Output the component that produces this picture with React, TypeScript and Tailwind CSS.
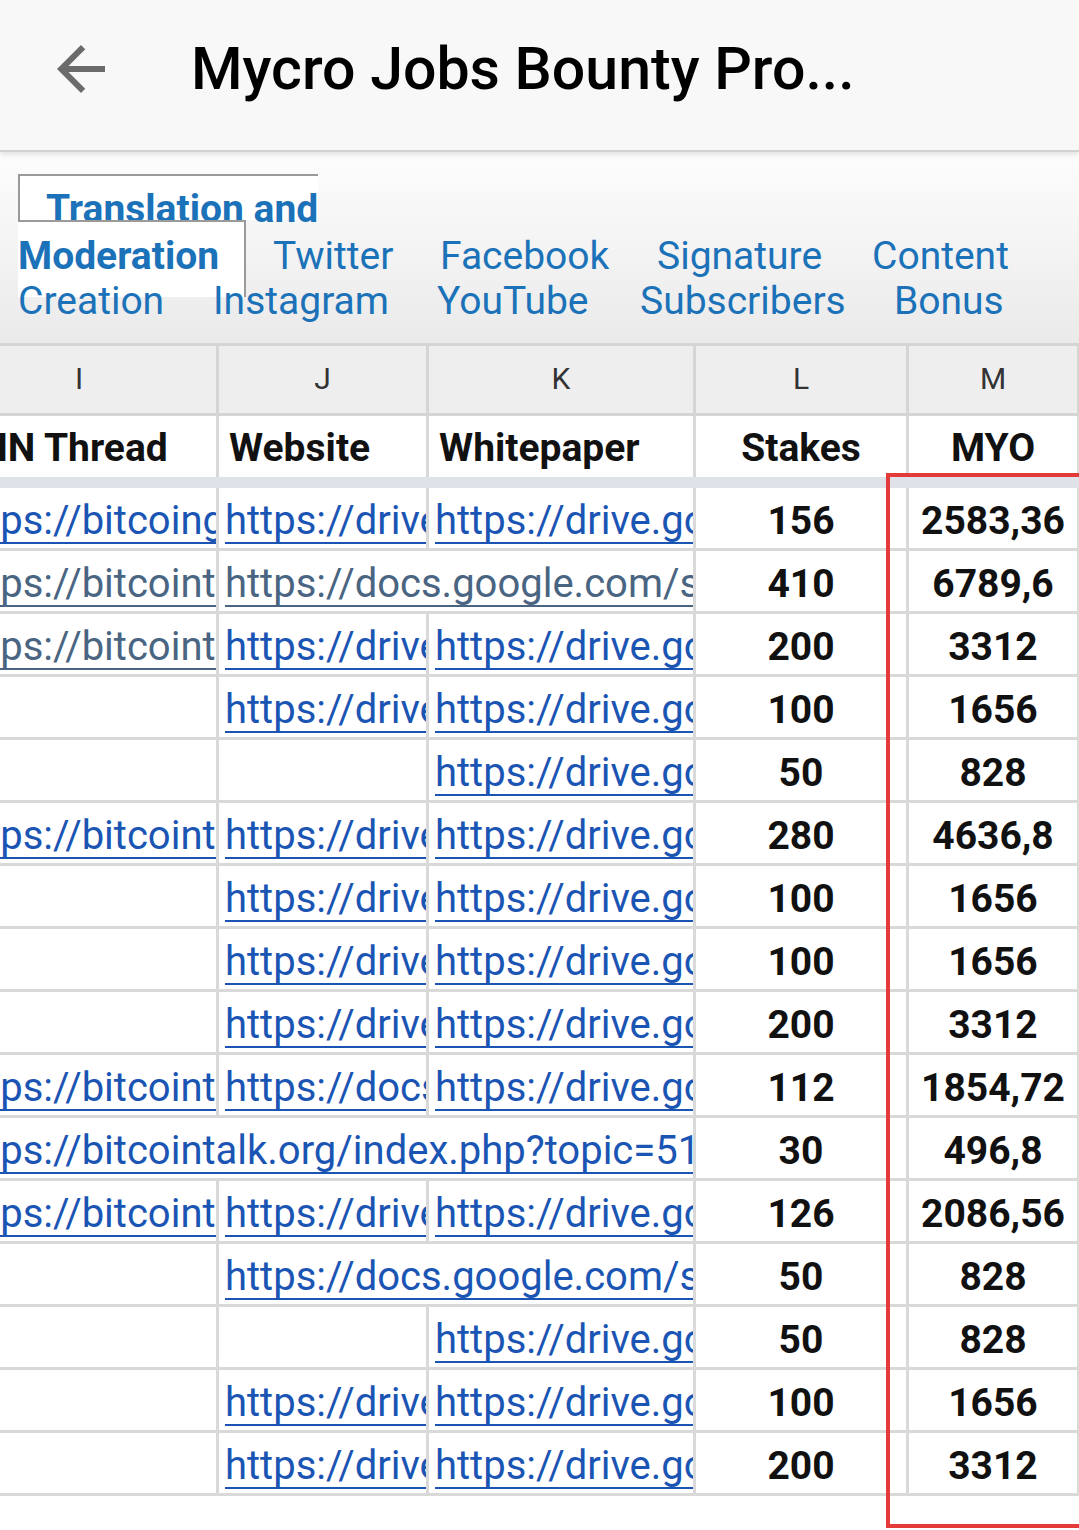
import React from "react";

type Kind = "link" | "visited" | "num";
type Cell = { w: string; t?: string; kind?: Kind; pad?: string };

const I = "w-[277px]";
const J = "w-[210px]";
const K = "w-[267px]";
const L = "w-[213px]";
const M = "w-[171px]";
const JK = "w-[477px]";
const IJK = "w-[754px]";

const bitcoinGarden = "https://bitcoingarden.org/forum/index.php?topic=31";
const bitcoinTalk = "https://bitcointalk.org/index.php?topic=5123456.0";
const drive = "https://drive.google.com/file/d/1Qx8vK2mZ/view";
const docs = "https://docs.google.com/spreadsheets/d/1aB2c/edit";

const link = (w: string, t: string, pad = "pl-[6px]"): Cell => ({ w, t, kind: "link", pad });
const visited = (w: string, t: string, pad = "pl-[6px]"): Cell => ({ w, t, kind: "visited", pad });
const num = (w: string, t: string): Cell => ({ w, t, kind: "num" });
const empty = (w: string): Cell => ({ w });

const rows: Cell[][] = [
  [link(I, bitcoinGarden, "pl-[10px]"), link(J, drive), link(K, drive), num(L, "156"), num(M, "2583,36")],
  [visited(I, bitcoinTalk, "pl-[10px]"), visited(JK, docs), num(L, "410"), num(M, "6789,6")],
  [visited(I, bitcoinTalk, "pl-[10px]"), link(J, drive), link(K, drive), num(L, "200"), num(M, "3312")],
  [empty(I), link(J, drive), link(K, drive), num(L, "100"), num(M, "1656")],
  [empty(I), empty(J), link(K, drive), num(L, "50"), num(M, "828")],
  [link(I, bitcoinTalk, "pl-[10px]"), link(J, drive), link(K, drive), num(L, "280"), num(M, "4636,8")],
  [empty(I), link(J, drive), link(K, drive), num(L, "100"), num(M, "1656")],
  [empty(I), link(J, drive), link(K, drive), num(L, "100"), num(M, "1656")],
  [empty(I), link(J, drive), link(K, drive), num(L, "200"), num(M, "3312")],
  [link(I, bitcoinTalk, "pl-[10px]"), link(J, docs), link(K, drive), num(L, "112"), num(M, "1854,72")],
  [link(IJK, "https://bitcointalk.org/index.php?topic=51", "pl-[10px]"), num(L, "30"), num(M, "496,8")],
  [link(I, bitcoinTalk, "pl-[10px]"), link(J, drive), link(K, drive), num(L, "126"), num(M, "2086,56")],
  [empty(I), link(JK, docs), num(L, "50"), num(M, "828")],
  [empty(I), empty(J), link(K, drive), num(L, "50"), num(M, "828")],
  [empty(I), link(J, drive), link(K, drive), num(L, "100"), num(M, "1656")],
  [empty(I), link(J, drive), link(K, drive), num(L, "200"), num(M, "3312")],
];

function DataCell({ c }: { c: Cell }) {
  const base = "h-[60px] shrink-0 border-r-[3px] border-[#d9d9d9] overflow-hidden whitespace-nowrap leading-[66px]";
  if (c.kind === "num") {
    return <div className={`${c.w} ${base} text-center text-[39px] font-bold text-[#111]`}>{c.t}</div>;
  }
  if (c.kind === "link" || c.kind === "visited") {
    const color = c.kind === "link" ? "text-[#1b55b4]" : "text-[#4a6582]";
    return (
      <div className={`${c.w} ${base} ${c.pad} text-[40px]`}>
        <span className={`${color} underline decoration-2 underline-offset-[8px]`}>{c.t}</span>
      </div>
    );
  }
  return <div className={`${c.w} ${base}`} />;
}

function Tabs() {
  return (
    <div className="h-[191px] bg-linear-to-b from-[#fdfdfd] to-[#eaeaea] pt-[22px] text-[39px] text-[#1b72b8] whitespace-nowrap">
      <div className="ml-[18px] w-[300px] h-[46px] border-t-2 border-l-2 border-[#9a9a9a] bg-white pl-[26px] pt-[11px] leading-[45px] font-bold">
        Translation and
      </div>
      <div className="relative">
        <div className="absolute left-[18px] top-0 w-[228px] h-[77px] border-t-2 border-r-2 border-[#9a9a9a] bg-white" />
        <div className="relative flex pt-[14px] leading-[45px]">
          <span className="w-[273px] pl-[18px] font-bold">Moderation</span>
          <span className="w-[167px]">Twitter</span>
          <span className="w-[217px]">Facebook</span>
          <span className="w-[215px]">Signature</span>
          <span>Content</span>
        </div>
        <div className="relative flex leading-[45px]">
          <span className="w-[213px] pl-[18px]">Creation</span>
          <span className="w-[224px]">Instagram</span>
          <span className="w-[203px]">YouTube</span>
          <span className="w-[254px]">Subscribers</span>
          <span>Bonus</span>
        </div>
      </div>
    </div>
  );
}

function Sheet() {
  const letters = [
    { w: I, t: "I" },
    { w: J, t: "J" },
    { w: K, t: "K" },
    { w: L, t: "L" },
    { w: M, t: "M" },
  ];
  const head = "h-[61px] shrink-0 overflow-hidden border-r-[3px] border-[#d9d9d9]";
  return (
    <div className="overflow-hidden">
      <div className="ml-[-58px] w-[1138px]">
        <div className="flex border-y-[3px] border-[#d5d5d5] bg-[#eeeeee]">
          {letters.map((l) => (
            <div
              key={l.t}
              className={`${l.w} h-[67px] shrink-0 border-r-[3px] border-[#d5d5d5] text-center text-[30px] leading-[66px] text-[#333]`}
            >
              {l.t}
            </div>
          ))}
        </div>
        <div className="flex bg-white text-[39px] font-bold text-[#111] leading-[64px] whitespace-nowrap">
          <div className={`${I} ${head} pl-[12px]`}>ANN Thread</div>
          <div className={`${J} ${head} pl-[10px]`}>Website</div>
          <div className={`${K} ${head} pl-[10px]`}>Whitepaper</div>
          <div className={`${L} ${head} text-center`}>Stakes</div>
          <div className={`${M} ${head} text-center`}>MYO</div>
        </div>
        <div className="h-[11px] bg-[#dfe2e8]" />
        {rows.map((r, i) => (
          <div key={i} className="flex border-b-[3px] border-[#d9d9d9] bg-white">
            {r.map((c, j) => (
              <DataCell key={j} c={c} />
            ))}
          </div>
        ))}
      </div>
    </div>
  );
}

export default function App() {
  return (
    <div className="relative w-[1079px] h-[1530px] overflow-hidden bg-white font-['Roboto',sans-serif]">
      <header className="relative z-10 h-[152px] bg-[#f8f8f8] border-b-2 border-[#d2d2d2] shadow-[0_3px_5px_rgba(0,0,0,0.1)]">
        <div className="flex items-center h-[138px]">
          <svg className="ml-[45px] w-[72px] h-[72px] shrink-0" viewBox="0 0 24 24" fill="#6b6b6b">
            <path d="M20 11H7.83l5.59-5.59L12 4l-8 8 8 8 1.41-1.41L7.83 13H20v-2z" />
          </svg>
          <h1 className="ml-[74px] text-[59px] font-medium text-black whitespace-nowrap">Mycro Jobs Bounty Pro...</h1>
        </div>
      </header>

      <Tabs />
      <Sheet />

      {/* highlight around the MYO column */}
      <div className="absolute left-[886px] top-[473px] w-[200px] h-[1055px] border-4 border-[#e53a3a]" />
    </div>
  );
}
